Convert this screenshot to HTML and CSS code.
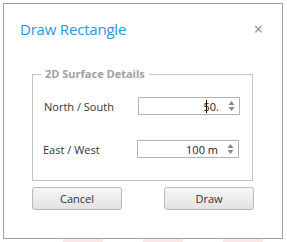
FILE: index.html
```html
<!DOCTYPE html>
<html>
<head>
    <title>Draw Rectangle</title>
    <link rel="stylesheet" href="styles.css">
</head>
<body>
    <div class="dialog">
        <div class="header">
            <span class="title">Draw Rectangle</span>
            <span class="close">&times;</span>
        </div>

        <fieldset class="details">
            <legend>2D Surface Details</legend>
            <div class="row">
                <label>North / South</label>
                <div class="spin">
                    <span class="value"><span class="caret"></span>50.</span>
                    <svg class="arrows" width="7" height="14" viewBox="0 0 7 14">
                        <path d="M3.5 2 L6.5 6 L0.5 6 Z" fill="#888"/>
                        <path d="M3.5 12 L6.5 8 L0.5 8 Z" fill="#888"/>
                    </svg>
                </div>
            </div>
            <div class="row second">
                <label>East / West</label>
                <div class="spin">
                    <span class="value">100 m</span>
                    <svg class="arrows" width="7" height="14" viewBox="0 0 7 14">
                        <path d="M3.5 2 L6.5 6 L0.5 6 Z" fill="#888"/>
                        <path d="M3.5 12 L6.5 8 L0.5 8 Z" fill="#888"/>
                    </svg>
                </div>
            </div>
        </fieldset>

        <div class="buttons">
            <button>Cancel</button>
            <button>Draw</button>
        </div>
    </div>
    <div class="behind">
        <span class="blot one"></span>
        <span class="blot two"></span>
        <span class="blot three"></span>
    </div>
</body>
</html>
```

FILE: styles.css
```css
body {
    margin: 0;
    padding: 3px;
    background: #fff;
    font-family: "Open Sans", "Noto Sans", sans-serif;
    color: #333;
}

.dialog {
    width: 278px;
    height: 234px;
    border: 1px solid #a0a0a0;
    background: #fff;
    box-sizing: content-box;
}

.header {
    display: flex;
    justify-content: space-between;
    align-items: flex-start;
    height: 52px;
    box-sizing: border-box;
    padding: 15px 19px 0 16px;
    line-height: 20px;
}

.title {
    font-size: 15px;
    color: #1e9be0;
    letter-spacing: -0.2px;
}

.close {
    font-size: 16px;
    color: #888;
}

.details {
    margin: 12px 0 0 28px;
    width: 219px;
    padding: 0 0 22px 0;
    border: 1px solid #c4c4c4;
    box-sizing: content-box;
}

.details legend {
    margin-left: 8px;
    padding: 0 4px;
    font-size: 11px;
    font-weight: bold;
    color: #a0a0a0;
    line-height: 12px;
}

.row {
    display: flex;
    align-items: center;
    margin-top: 17px;
    padding-left: 11px;
}

.row.second {
    margin-top: 25px;
    padding-left: 10px;
}

.row label {
    width: 94px;
    font-size: 11px;
    color: #333;
}

.spin {
    display: flex;
    align-items: center;
    justify-content: flex-end;
    width: 98px;
    height: 16px;
    border: 1px solid #b4b4b4;
    padding-right: 2px;
    box-sizing: content-box;
}

.value {
    font-size: 11px;
    color: #222;
    margin-right: 9px;
    display: flex;
    align-items: center;
}

.caret {
    width: 1px;
    height: 13px;
    background: #000;
    margin-right: -3px;
}

.arrows {
    margin-right: 2px;
}

.buttons {
    display: flex;
    justify-content: space-between;
    width: 222px;
    margin: 6px 0 0 28px;
}

.buttons button {
    width: 90px;
    height: 23px;
    font-family: "Open Sans", "Noto Sans", sans-serif;
    font-size: 11px;
    color: #333;
    border: 1px solid #b9b9b9;
    border-radius: 3px;
    background: linear-gradient(#f6f6f6, #e2e2e2);
    padding: 0;
}

.behind {
    display: flex;
    gap: 40px;
    padding-left: 60px;
}

.blot {
    width: 40px;
    height: 4px;
    background: #fbe8e8;
}
```
